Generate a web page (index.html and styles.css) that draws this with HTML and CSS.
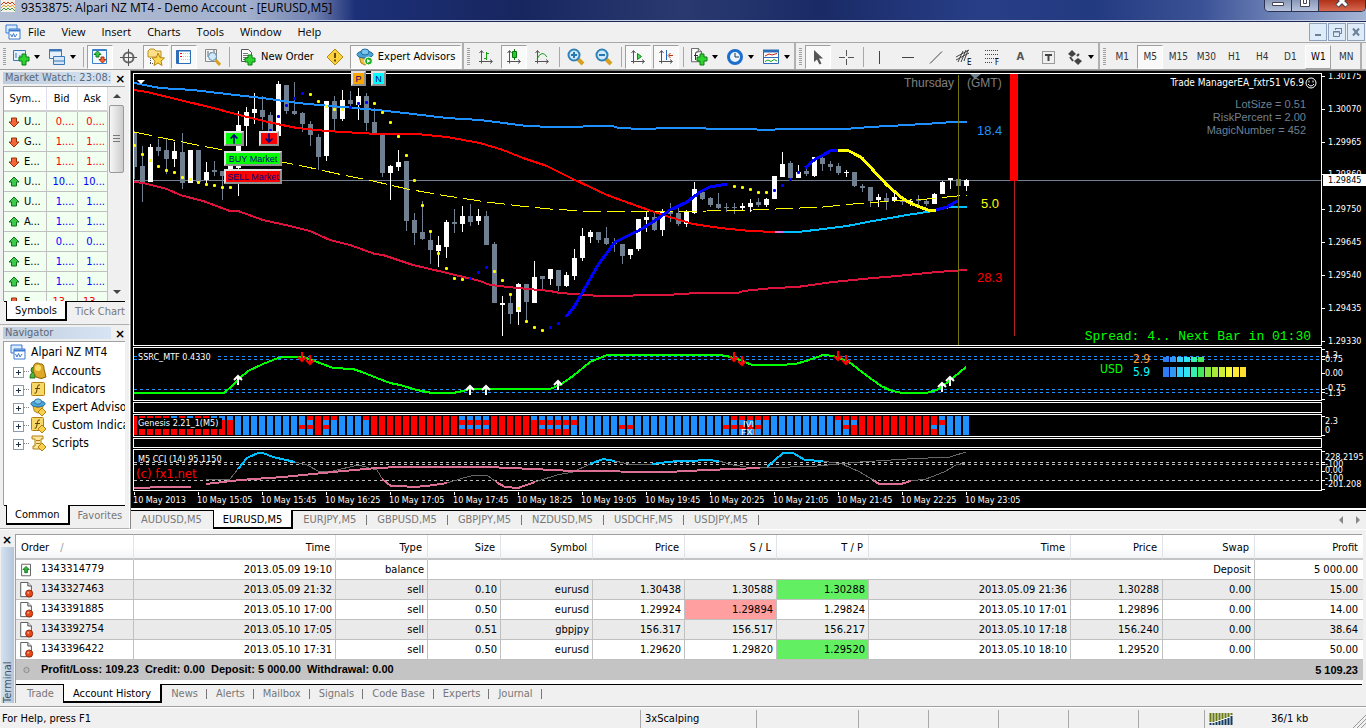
FILE: index.html
```html
<!DOCTYPE html>
<html lang="en">
<head>
<meta charset="utf-8">
<title>9353875: Alpari NZ MT4 - Demo Account - [EURUSD,M5]</title>
<link rel="stylesheet" href="styles.css">
</head>
<body>
<svg class="defs" aria-hidden="true">
  <defs>
    <symbol id="up" viewBox="0 0 12 12"><path d="M6 1 11 6 8.500 6 8.500 10 3.500 10 3.500 6 1 6Z" fill="#3cc84a" stroke="#12701c"/></symbol>
    <symbol id="down" viewBox="0 0 12 12"><path d="M6 11 1 6 3.500 6 3.500 2 8.500 2 8.500 6 11 6Z" fill="#f2673a" stroke="#99300c"/></symbol>
    <symbol id="axes" viewBox="0 0 18 18"><path d="M4.500 3V15.500M2 13.500H15M2.500 5 4.500 2.500 6.500 5M13 11.500 15.500 13.500 13 15.500" fill="none" stroke="#555"/></symbol>
    <symbol id="doc" viewBox="0 0 16 18"><path d="M1.500.500H9.500L13.500 4.500V16.500H1.500Z" fill="#fff" stroke="#444"/><path d="M9.500.500V4.500H13.500" fill="#ddd" stroke="#444"/></symbol>
    <symbol id="sheet" viewBox="0 0 16 18"><use href="#doc"/><circle cx="11" cy="13" r="4" fill="#e8481c" stroke="#8c2508"/><circle cx="10" cy="12" r="1" fill="#ffb090"/></symbol>
    <symbol id="app" viewBox="0 0 16 16"><path d="M1 1H12V9H1Z" fill="#dcecff" stroke="#3a7bd0"/><path d="M4 5H15V15H4Z" fill="#fff" stroke="#3a7bd0"/><path d="M4 6.500H15" stroke="#3a7bd0" stroke-width="2"/><path d="M5.500 10 7 13 8.500 9.500 10 13 12 10" fill="none" stroke="#3a7bd0"/></symbol>
    <symbol id="hat" viewBox="0 0 18 18"><path d="M3 8 9 11 15 8 13 15 9 17 5 15Z" fill="#f2c33c" stroke="#ab7c10"/><ellipse cx="9" cy="6.500" rx="8" ry="3.500" fill="#4ba5d8" stroke="#226b9c"/><ellipse cx="9" cy="4" rx="4" ry="3" fill="#7cc6ec" stroke="#226b9c"/></symbol>
  </defs>
</svg>
<div class="app">
  <header class="titlebar">
    <svg class="logo" viewBox="0 0 14 14"><path d="M0 0H14V12H0Z" fill="#f4f0e4"/><path d="M0 5 3 2 5 4 7 2 9 4 11 2 14 5" fill="none" stroke="#d03820"/><path d="M0 8 3 5 5 7 7 5 9 7 11 5 14 8" fill="none" stroke="#e0a030"/><path d="M0 11 3 8 5 10 7 8 9 10 11 8 14 11" fill="none" stroke="#3a9a40"/></svg>
    <h1>9353875: Alpari NZ MT4 - Demo Account - [EURUSD,M5]</h1>
    <div class="winbtns">
      <button aria-label="Minimize"><svg viewBox="0 0 14 8"><path d="M1.500 2.500H12.500V5.500H1.500Z" fill="#fff" stroke="#445"/></svg></button>
      <button aria-label="Restore"><svg viewBox="0 0 14 8"><path d="M2.500-1V6.500H11.500V-1M5.500-1V3.500H8.500V-1" fill="#fff" stroke="#445"/></svg></button>
      <button class="close" aria-label="Close"><svg viewBox="0 0 14 8"><path d="M2-4 12 6M12-4 2 6" stroke="#445" stroke-width="5"/><path d="M2.500-3.500 11.500 5.500M11.500-3.500 2.500 5.500" stroke="#fff" stroke-width="3"/></svg></button>
    </div>
  </header>

  <nav class="menubar">
    <svg class="i16"><use href="#app"/></svg>
    <button>File</button><button>View</button><button>Insert</button><button>Charts</button><button>Tools</button><button>Window</button><button>Help</button>
    <div class="mdi">
      <button aria-label="Minimize chart"><svg viewBox="0 0 16 16"><path d="M5 11H11" stroke="#6b7f95" stroke-width="2"/></svg></button>
      <button aria-label="Restore chart"><svg viewBox="0 0 16 16"><path d="M6.500 6V4.500H12.500V9.500H11M6 4.500H13M4.500 7.500H10.500V12.500H4.500ZM4 8H11" fill="none" stroke="#6b7f95"/></svg></button>
      <button aria-label="Close chart"><svg viewBox="0 0 16 16"><path d="M5 4.500 11 11.500M11 4.500 5 11.500" stroke="#6b7f95" stroke-width="2"/></svg></button>
    </div>
  </nav>

  <div class="toolbars">
    <div class="bar">
      <i class="grip"></i>
      <button class="drop" aria-label="New chart"><svg class="i18" viewBox="0 0 18 18"><path d="M1.500 2.500H13.500V12.500H1.500Z" fill="#e4f1fc" stroke="#3c78b8"/><path d="M4 5V10M8 7V10" stroke="#3c78b8"/><path d="M10 6H14V9H17V13H14V17H10V13H7V9H10Z" fill="#2fd52f" stroke="#0b7a12"/></svg></button>
      <button class="drop" aria-label="Profiles"><svg class="i18" viewBox="0 0 18 18"><path d="M1.500 1.500H13.500V10.500H1.500Z" fill="#e4f1fc" stroke="#3c78b8"/><path d="M1 2.500H14" stroke="#3c78b8" stroke-width="2"/><path d="M5.500 8.500H16.500V16.500H5.500Z" fill="#d4e6f8" stroke="#3c78b8"/><path d="M5 13H17" stroke="#3c78b8"/></svg></button>
      <i class="sep"></i>
      <button class="on" aria-label="Market Watch"><svg class="i18" viewBox="0 0 18 18"><path d="M1.500 1.500H15.500V15.500H1.500Z" fill="#f4faff" stroke="#3a80cc"/><path d="M1 2.500H16" stroke="#3a80cc"/><path d="M6.500 3 10 6.500H8V9H5V6.500H3Z" fill="#3cc84a" stroke="#127a1c"/><path d="M11.500 15 8 11.500H10V9H13V11.500H15Z" fill="#f2673a" stroke="#a83408"/></svg></button>
      <button aria-label="Data Window"><svg class="i18" viewBox="0 0 18 18"><circle cx="9.500" cy="9.500" r="5" fill="none" stroke="#666" stroke-width="2"/><path d="M9.500 1V18M1 9.500H18" stroke="#555"/></svg></button>
      <button class="on" aria-label="Navigator"><svg class="i18" viewBox="0 0 18 18"><path d="M1 3 3 1H7L9 3H14V9H1Z" fill="#fae189" stroke="#c09020"/><path d="M11 5 13 9.500 17.500 10 14 13 15 17.500 11 15 7 17.500 8 13 5 10 9.500 9.500Z" fill="#fcd84c" stroke="#b88412"/><path d="M3.500 10V16M3 15.500H7" stroke="#555" stroke-dasharray="1 1"/></svg></button>
      <button class="on" aria-label="Terminal"><svg class="i18" viewBox="0 0 18 18"><path d="M1.500 2.500H15.500V15.500H1.500Z" fill="#fff" stroke="#2d6db8"/><path d="M1 3H16" stroke="#2d6db8"/><path d="M3 3V15" stroke="#2d6db8" stroke-width="2"/><path d="M6 5.500H15M6 8.500H15M6 11.500H15" stroke="#b8c8dc" stroke-dasharray="1 1"/><path d="M5 5.500H7M5 8.500H7" stroke="red"/></svg></button>
      <button aria-label="Strategy Tester"><svg class="i18" viewBox="0 0 18 18"><path d="M2.500 1.500H13.500V13.500H2.500Z" fill="#f4f4f4" stroke="#888"/><path d="M5 3V9M8 4V8M11 2V9" stroke="#666"/><circle cx="9.500" cy="8.500" r="4" fill="#cfe8fa" stroke="#5b8db8"/><path d="M12.500 12 17 17" stroke="#d8a020" stroke-width="3"/></svg></button>
      <i class="sep"></i>
      <button class="text"><svg class="i18" viewBox="0 0 18 18"><path d="M2.500 1.500H9.500L12.500 4.500V13.500H2.500Z" fill="#fff" stroke="#555"/><path d="M4 5.500H9M4 7.500H11M4 9.500H9M4 11.500H7" stroke="#777"/><path d="M9 7H13V10H16V14H13V17H9V14H6V10H9Z" fill="#2fd52f" stroke="#0b7a12"/></svg>New Order</button>
      <button aria-label="MetaEditor"><svg class="i18" viewBox="0 0 18 18"><path d="M9 1 17 9 9 17 1 9Z" fill="#fbd23c" stroke="#b48a10"/><path d="M9 5V10M9 11.500V13.500" stroke="#6b4a00" stroke-width="2"/></svg></button>
      <button class="text on"><svg class="i18"><use href="#hat"/><circle cx="12.500" cy="13" r="4" fill="#20b028" stroke="#fff"/><path d="M11 11 14.500 13 11 15Z" fill="#fff"/></svg>Expert Advisors</button>
    </div>
    <div class="bar">
      <i class="grip"></i>
      <button aria-label="Bar Chart"><svg class="i18"><use href="#axes"/><path d="M9.500 4V12M9 5.500H12M7 10.500H10" stroke="#16a016"/></svg></button>
      <button class="on" aria-label="Candlesticks"><svg class="i18"><use href="#axes"/><path d="M9.500 1V12" stroke="#087808"/><path d="M7.500 3.500H11.500V9.500H7.500Z" fill="#28c838" stroke="#087808"/></svg></button>
      <button aria-label="Line Chart"><svg class="i18"><use href="#axes"/><path d="M4 11Q9 1 14 9" fill="none" stroke="#16a016"/></svg></button>
      <i class="sep"></i>
      <button aria-label="Zoom In"><svg class="i18" viewBox="0 0 18 18"><path d="M11 11 16 16" stroke="#d8a020" stroke-width="4"/><circle cx="7" cy="7" r="5.500" fill="#cfeafc" stroke="#3080b8" stroke-width="2"/><path d="M4 7H10M7 4V10" stroke="#2878b0" stroke-width="2"/></svg></button>
      <button aria-label="Zoom Out"><svg class="i18" viewBox="0 0 18 18"><path d="M11 11 16 16" stroke="#d8a020" stroke-width="4"/><circle cx="7" cy="7" r="5.500" fill="#cfeafc" stroke="#3080b8" stroke-width="2"/><path d="M4 7H10" stroke="#2878b0" stroke-width="2"/></svg></button>
      <i class="sep"></i>
      <button class="on" aria-label="Auto Scroll"><svg class="i18"><use href="#axes"/><path d="M8.500 5.500 12.500 8.500 8.500 11.500Z" fill="#4bd858" stroke="#0b8a16"/></svg></button>
      <button class="on" aria-label="Chart Shift"><svg class="i18"><use href="#axes"/><path d="M9.500 2V12" stroke="#1f68c0"/><path d="M16 7.500H12M13.500 5 11 7.500 13.500 10" fill="none" stroke="#c03008"/></svg></button>
      <i class="sep"></i>
      <button class="drop" aria-label="Indicators"><svg class="i18" viewBox="0 0 18 18"><use href="#doc" width="14" height="15"/><path d="M8 4Q5.500 3 5.500 6V12M4 7.500H8" fill="none" stroke="#333"/><path d="M10 6H14V9H17V13H14V17H10V13H7V9H10Z" fill="#2fd52f" stroke="#0b7a12"/></svg></button>
      <button class="drop" aria-label="Periods"><svg class="i18" viewBox="0 0 18 18"><circle cx="9" cy="9" r="6.500" fill="#eaf5ff" stroke="#1c6fce" stroke-width="3"/><path d="M9 5V9H13" fill="none" stroke="#234"/></svg></button>
      <button class="drop" aria-label="Templates"><svg class="i18" viewBox="0 0 18 18"><path d="M1.500 2.500H16.500V15.500H1.500Z" fill="#fff" stroke="#2d6db8"/><path d="M1 3H17" stroke="#2d6db8" stroke-width="3"/><path d="M1 9.500H17" stroke="#2d6db8"/><path d="M3 8 7 6 10 7 15 5.500" fill="none" stroke="#c02010"/><path d="M3 13.500 6 12 9 13.500 12 11.500 15 13" fill="none" stroke="#16a016"/></svg></button>
    </div>
    <div class="bar">
      <i class="grip"></i>
      <button class="on" aria-label="Cursor"><svg class="i18" viewBox="0 0 18 18"><path d="M5 2V14L8 11.500 10.500 16.500 12.500 15.500 10 10.500H14Z" fill="#555"/></svg></button>
      <button aria-label="Crosshair"><svg class="i18" viewBox="0 0 18 18"><path d="M9.500 2V8M9.500 11V17M2 9.500H8M11 9.500H17" stroke="#555"/></svg></button>
      <i class="sep"></i>
      <button aria-label="Vertical Line"><svg class="i18" viewBox="0 0 18 18"><path d="M8.500 3V16" stroke="#444"/></svg></button>
      <button aria-label="Horizontal Line"><svg class="i18" viewBox="0 0 18 18"><path d="M3 9.500H15" stroke="#444"/></svg></button>
      <button aria-label="Trendline"><svg class="i18" viewBox="0 0 18 18"><path d="M3 15.500 15 3.500" stroke="#444"/></svg></button>
      <button aria-label="Equidistant Channel"><svg class="i18" viewBox="0 0 18 18"><path d="M1 9 14 2M1 12 14 5M3 14 8 3M6 14 11 2M9 13 13 2" stroke="#444"/><text class="sub" x="12" y="17">E</text></svg></button>
      <button aria-label="Fibonacci"><svg class="i18" viewBox="0 0 18 18"><path d="M2 2.500H15M2 6.500H15M2 10.500H15M2 14.500H10" stroke="#444" stroke-dasharray="1 1"/><text class="sub" x="12" y="17">F</text></svg></button>
      <button class="glyph" aria-label="Text">A</button>
      <button aria-label="Text Label"><svg class="i18" viewBox="0 0 18 18"><path d="M3.500 3.500H15.500V15.500H3.500Z" fill="none" stroke="#444" stroke-dasharray="1 1"/><path d="M6 7H13M9.500 7V13" fill="none" stroke="#444" stroke-width="2"/></svg></button>
      <button class="drop" aria-label="Arrows"><svg class="i18" viewBox="0 0 18 18"><path d="M6 2 10 6 6 9 2 6ZM12 10 16 13 12 17 8 13Z" fill="#444"/><path d="M4 9 7 13M11 8 13 6" stroke="#444" stroke-width="2"/></svg></button>
    </div>
    <div class="bar periods">
      <i class="grip"></i>
      <button>M1</button><button class="on">M5</button><button>M15</button><button>M30</button><button>H1</button><button>H4</button><button>D1</button><button class="hover">W1</button><button>MN</button>
    </div>
  </div>

  <main class="workspace">
    <aside class="side">
      <section class="panel market">
        <div class="caption"><h2>Market Watch: 23:08:</h2><button aria-label="Close Market Watch">×</button></div>
        <div class="list">
          <table class="quotes">
            <thead><tr><th>Sym...</th><th>Bid</th><th>Ask</th></tr></thead>
            <tbody id="quotes"></tbody>
          </table>
          <div class="scroll"><i class="arrow top"></i><i class="thumb"></i><i class="arrow bottom"></i></div>
        </div>
        <div class="tabs small"><button class="active">Symbols</button><button>Tick Chart</button></div>
      </section>
      <section class="panel navigator">
        <div class="caption"><h2>Navigator</h2><button aria-label="Close Navigator">×</button></div>
        <ul class="tree">
          <li class="root"><svg class="i16"><use href="#app"/></svg>Alpari NZ MT4</li>
          <li><svg class="i18" viewBox="0 0 18 18"><circle cx="5" cy="8" r="3" fill="#49b83c" stroke="#21701a"/><path d="M1 16Q1 10 6 10V16Z" fill="#49b83c" stroke="#21701a"/><path d="M4 9Q4 1 8 1 10 1 11 2 15 1 15 7L17 15Q12 18 7 15Z" fill="#e0a828" stroke="#8c6408"/><circle cx="9" cy="6" r="3" fill="#fce06c"/></svg>Accounts</li>
          <li><svg class="i18" viewBox="0 0 18 18"><rect x="2.500" y="2.500" width="13" height="13" rx="1" fill="#f8d868" stroke="#b08010"/><path d="M11 5Q9 4 8.500 7L7.500 12Q7 14 5.500 13M6 8.500H11" fill="none" stroke="#604400"/></svg>Indicators</li>
          <li><svg class="i18" viewBox="0 0 18 18"><use href="#hat" width="18" height="16"/><path d="M13 10 17 14 13 18 9 14Z" fill="#f8d04c" stroke="#b08010"/></svg>Expert Advisors</li>
          <li><svg class="i18" viewBox="0 0 18 18"><rect x="2.500" y="1.500" width="12" height="13" rx="1" fill="#f8d868" stroke="#b08010"/><path d="M11 4Q9 3 8.500 6L7.500 11Q7 13 5.500 12M6 7.500H11" fill="none" stroke="#604400"/><path d="M13 9 17 13 13 17 9 13Z" fill="#f8d04c" stroke="#b08010"/></svg>Custom Indicators</li>
          <li><svg class="i18" viewBox="0 0 18 18"><path d="M3 2H14V5H12V12H14V15H4V12H6V5H3Z" fill="#fbe59a" stroke="#b08010"/><path d="M7 6.500H11M7 9.500H11" stroke="#b08010"/><path d="M13 9 17 13 13 17 9 13Z" fill="#f8d04c" stroke="#b08010"/></svg>Scripts</li>
        </ul>
        <div class="tabs small"><button class="active">Common</button><button>Favorites</button></div>
      </section>
    </aside>

    <section class="charts">
      <div class="frame">
        <div class="pane price">
          <svg class="plot" id="price"></svg>
          <button class="obj up" aria-label="Buy arrow"><svg viewBox="0 0 14 12"><path d="M7 12V2M3 6 7 2 11 6" fill="none" stroke="#000080" stroke-width="2"/></svg></button>
          <button class="obj dn" aria-label="Sell arrow"><svg viewBox="0 0 14 12"><path d="M7 0V10M3 6 7 10 11 6" fill="none" stroke="#000080" stroke-width="2"/></svg></button>
          <button class="obj buy">BUY Market</button>
          <button class="obj sell">SELL Market</button>
          <button class="obj p">P</button>
          <button class="obj n">N</button>
          <p class="ea">Trade ManagerEA_fxtr51 V6.9<svg viewBox="0 0 12 12"><circle cx="6" cy="6" r="5" fill="none" stroke="#fff"/><path d="M4 3.500V5.500M8 3.500V5.500M3 7Q6 11 9 7" fill="none" stroke="#fff"/></svg></p>
          <div class="lots"><p>LotSize = 0.51</p><p>RiskPercent = 2.00</p><p>MagicNumber = 452</p></div>
          <p class="spread">Spread: 4.. Next Bar in 01:30</p>
        </div>
        <svg class="axis" id="axisPrice"></svg>

        <div class="pane ssrc"><svg class="plot" id="ssrc"></svg><p class="label">SSRC_MTF 0.4330</p></div>
        <svg class="axis" id="axisSsrc"></svg>

        <div class="pane"></div><i></i>

        <div class="pane genesis"><svg class="plot" id="genesis"></svg><p class="label solid">Genesis 2.21_1(M5)</p></div>
        <svg class="axis" id="axisGenesis"></svg>

        <div class="pane"></div><i></i>

        <div class="pane cci"><svg class="plot" id="cci"></svg><p class="label">M5 CCI (14) 95.1150</p><p class="credit">(c) fx1.net</p></div>
        <svg class="axis" id="axisCci"></svg>

        <div class="times" id="times"></div>
      </div>
      <div class="tabs sheets">
        <button>AUDUSD,M5</button><button class="active">EURUSD,M5</button><button>EURJPY,M5</button><button>GBPUSD,M5</button><button>GBPJPY,M5</button><button>NZDUSD,M5</button><button>USDCHF,M5</button><button>USDJPY,M5</button>
        <svg class="pager" viewBox="0 0 24 10"><path d="M5 1V9L1 5ZM18 1V9L22 5Z" fill="#888"/></svg>
      </div>
    </section>
  </main>

  <section class="terminal">
    <div class="rail"><button aria-label="Close Terminal">×</button><h2>Terminal</h2></div>
    <div class="book">
      <table class="orders">
        <colgroup><col class="c118"><col class="c202"><col class="c92"><col class="c73"><col class="c92"><col class="c92"><col class="c92"><col class="c92"><col class="c202"><col class="c92"><col class="c92"><col class="c108"></colgroup>
        <thead><tr><th>Order <span>/</span></th><th>Time</th><th>Type</th><th>Size</th><th>Symbol</th><th>Price</th><th>S / L</th><th>T / P</th><th>Time</th><th>Price</th><th>Swap</th><th>Profit</th></tr></thead>
        <tbody>
          <tr><td><svg class="ico" viewBox="0 0 16 18"><path d="M2.500 2.500H12.500V15.500H2.500Z" fill="#fff" stroke="#555"/><path d="M7.500 5 11 8.500H9V12H6V8.500H4Z" fill="#2fb83a" stroke="#11701a"/></svg>1343314779</td><td>2013.05.09 19:10</td><td>balance</td><td colspan="8">Deposit</td><td>5 000.00</td></tr>
          <tr><td><svg class="ico"><use href="#sheet"/></svg>1343327463</td><td>2013.05.09 21:32</td><td>sell</td><td>0.10</td><td>eurusd</td><td>1.30438</td><td>1.30588</td><td class="tp">1.30288</td><td>2013.05.09 21:36</td><td>1.30288</td><td>0.00</td><td>15.00</td></tr>
          <tr><td><svg class="ico"><use href="#sheet"/></svg>1343391885</td><td>2013.05.10 17:00</td><td>sell</td><td>0.50</td><td>eurusd</td><td>1.29924</td><td class="sl">1.29894</td><td>1.29824</td><td>2013.05.10 17:01</td><td>1.29896</td><td>0.00</td><td>14.00</td></tr>
          <tr><td><svg class="ico"><use href="#sheet"/></svg>1343392754</td><td>2013.05.10 17:05</td><td>sell</td><td>0.51</td><td>gbpjpy</td><td>156.317</td><td>156.517</td><td>156.217</td><td>2013.05.10 17:18</td><td>156.240</td><td>0.00</td><td>38.64</td></tr>
          <tr><td><svg class="ico"><use href="#sheet"/></svg>1343396422</td><td>2013.05.10 17:31</td><td>sell</td><td>0.50</td><td>eurusd</td><td>1.29620</td><td>1.29820</td><td class="tp">1.29520</td><td>2013.05.10 18:10</td><td>1.29520</td><td>0.00</td><td>50.00</td></tr>
        </tbody>
        <tfoot><tr><td colspan="11"><svg class="ico" viewBox="0 0 16 18"><circle cx="8" cy="9" r="3" fill="#bbb" stroke="#888"/></svg>Profit/Loss: 109.23&nbsp; Credit: 0.00&nbsp; Deposit: 5 000.00&nbsp; Withdrawal: 0.00</td><td>5 109.23</td></tr></tfoot>
      </table>
      <div class="tabs pages"><button>Trade</button><button class="active">Account History</button><button>News</button><button>Alerts</button><button>Mailbox</button><button>Signals</button><button>Code Base</button><button>Experts</button><button>Journal</button></div>
    </div>
  </section>

  <footer class="status">
    <span class="help">For Help, press F1</span><span class="s116">3xScalping</span><span class="s102"></span><span class="s70"></span><span class="s70"></span><span class="s70"></span><span class="s70"></span><span class="s66"></span>
    <span class="net"><svg viewBox="0 0 24 12"><path d="M1.500 0V9M4.500 0V9M7.500 0V8M10.500 0V7M13.500 0V6M16.500 0V5M19.500 0V4M22.500 0V2" stroke="#6b7a10" stroke-width="2"/><path d="M1.500 10V12M4.500 10V12M7.500 9V12M10.500 8V12M13.500 7V12M16.500 6V12M19.500 5V12M22.500 3V12" stroke="#103c60" stroke-width="2"/></svg>36/1 kb</span>
    <svg class="corner" viewBox="0 0 14 14"><path d="M1 14 14 1M5 14 14 5M9 14 14 9" stroke="#999"/></svg>
  </footer>
</div>
<script src="chart.js"></script>
</body>
</html>
```
FILE: chart.js
```js
const byId = id => document.getElementById(id);
const STEP = 8;
const FIRST = 134;
const barX = k => FIRST + STEP * k;

// Window-space origin of each plot area
const layer = (y, content) => `<g transform="translate(-134 ${-y})">${content}</g>`;
const line = (pts, cls) => `<polyline class="${cls}" points="${pts}"/>`;
const rule = (y, cls) => `<line class="${cls}" x1="0" x2="100%" y1="${y}" y2="${y}"/>`;

// Market Watch rows
byId('quotes').innerHTML = [
  ['down', 'U...', '0....'], ['down', 'G...', '1....'], ['down', 'E...', '1....'],
  ['up', 'U...', '10...'], ['up', 'U...', '1....'], ['up', 'A...', '1....'],
  ['up', 'E...', '0....'], ['up', 'E...', '1....'], ['up', 'E...', '1....'], ['down', 'E...', '13...']
].map(([d, s, q]) => `<tr class="${d}"><td><svg class="i12"><use href="#${d}"/></svg>${s}</td><td>${q}</td><td>${q}</td></tr>`).join('');

// Candles: high, low, body top, body bottom; w = rising, g = falling
const candles = `131 179 133 167 g,146 202 166 182 g,144 182 147 182 w,139 156 147 151 g,139 174 150 159 g,142 167 151 159 w,133 189 152 183 g,150 183 150 183 w,150 182 150 182 g,162 183 172 180 w,161 176 170 172 g,171 200 171 176 g,165 180 165 180 w,111 196 125 168 w,107 146 112 126 w,93 124 109 113 w,96 130 110 117 g,112 131 115 131 g,81 140 84 136 w,85 114 85 111 g,82 115 111 114 g,112 132 113 124 g,121 146 124 135 g,134 170 137 157 g,101 161 101 156 w,96 131 101 119 g,90 121 100 119 w,91 108 100 104 g,88 120 96 105 w,93 131 96 123 g,108 133 122 133 g,134 177 134 173 g,165 200 166 173 w,150 171 162 167 w,161 231 161 221 g,213 245 220 233 g,201 240 232 239 g,231 264 240 250 g,236 267 245 251 w,220 258 222 247 w,209 233 222 224 g,206 232 216 224 w,204 226 216 222 g,209 225 216 221 w,211 245 216 245 g,242 303 244 303 g,296 336 303 305 w,296 324 303 314 g,283 325 284 312 w,284 322 284 302 g,261 303 277 303 w,276 289 276 279 g,269 285 269 279 w,270 291 270 286 g,272 287 275 286 w,249 280 258 276 w,228 261 236 258 w,230 243 232 237 w,232 243 232 240 g,227 245 238 244 g,238 252 242 244 g,244 264 244 256 g,249 259 249 255 w,219 251 219 249 w,212 232 217 220 w,212 231 217 230 g,209 236 212 230 w,203 222 212 214 g,208 226 213 224 g,210 227 212 224 w,182 214 189 213 w,189 200 192 199 g,197 207 198 205 g,193 209 204 208 g,203 212 207 208 g,203 214 207 208 g,203 210 206 208 w,199 212 203 207 w,198 207 202 205 g,198 207 199 205 w,176 199 176 199 w,152 177 164 177 w,161 178 163 178 g,165 178 172 178 w,167 176 171 174 g,157 177 157 176 w,155 171 158 164 g,161 171 164 167 g,163 175 166 173 g,170 177 172 173 w,172 187 172 186 g,184 192 186 188 g,187 207 187 201 g,194 207 197 200 w,193 210 198 202 g,193 202 197 201 w,198 205 200 202 g,199 206 201 203 w,195 205 199 201 g,200 206 201 204 g,193 204 194 204 w,181 194 182 194 w,178 189 178 180 w,179 186 179 186 g,179 191 180 186 w`
  .split(',').map((row, k) => {
    const [h, l, t, b, c] = row.split(' ');
    const x = barX(k);
    return `<rect class="${c}" x="${x}" y="${h}" width="1" height="${l - h}"/><rect class="${c}" x="${x - 2}" y="${t}" width="5" height="${Math.max(1, b - t)}"/>`;
  }).join('');

// Dotted indicator: first bar, colour, levels
const dots = [
  [0, 'yellow', [145, 154, 160, 166, 170, 172, 177, 179, 182, 184, 185, 187, 187]],
  [17, 'blue', [130, 116, 105, 98, 93]], [22, 'yellow', [94, 101, 106, 109, 109]],
  [27, 'blue', [107, 103, 102]], [30, 'yellow', [103, 112, 122, 136, 155, 180, 205, 231, 253, 268, 278, 279]],
  [42, 'blue', [278, 272, 267]], [45, 'yellow', [271, 280, 294, 308, 321, 327, 330]],
  [52, 'blue', [327, 323]], [75, 'yellow', [186, 187, 189, 192, 192]], [80, 'blue', [190, 185, 179, 172]]
].map(([k, c, ys]) => ys.map((y, i) => `<rect x="${barX(k + i) - 1}" y="${y - 1}" width="3" height="3" rx="1" fill="${c}"/>`).join('')).join('');

byId('price').innerHTML = rule(106, 'bid') + layer(74,
  candles +
  line('134,83 160,88 193,90 227,94 262,98 277,100 297,103 330,106 343,107 377,110 413,114 447,118 480,120 527,126 553,127 613,126 618,128 643,129 670,128 740,129 773,130 777,129 845,129 870,127 907,125 940,123 952,122 967,122', 'l2 dodger') +
  line('134,90 147,92 180,100 213,108 247,117 277,124 297,128 327,131 377,134 417,134 447,137 480,143 503,150 523,158 547,166 573,179 607,195 640,207 663,215 693,224 720,228 750,231 776,232', 'l2 red') +
  line('775,232 783,232', 'l2 orchid') +
  line('783,232 798,232 823,229 847,226 873,221 907,215 933,211 950,207 967,207', 'l2 sky') +
  line('134,182 143,183 167,189 180,195 203,201 230,211 238,211 263,220 290,226 310,231 330,240 350,245 375,254 383,255 413,265 447,273 480,281 490,285 517,288 550,291 560,293 600,296 667,295 697,293 738,293 743,291 773,288 797,287 833,282 873,278 897,276 937,272 967,270', 'l2 crimson') +
  line('134,132 173,140 197,145 223,150 282,162 307,167 343,175 373,181 407,189 447,196 487,202 520,206 550,209 583,211 613,212 707,211 753,210 800,208 823,207 853,204 893,201 927,199 967,195', 'l1 dash yellow') +
  dots +
  line('566,317 574,307 582,293 590,279 598,265 607,253 614,243 623,238 638,231 653,222 670,210 687,202 700,192 710,187 727,184', 'l3 blue') +
  line('805,168 814,160 823,155 830,151 838,150', 'l3 blue') +
  line('838,150 847,150 853,153 862,158 873,170 887,185 902,198 910,203 920,207 928,210 936,211', 'l3 yellow') +
  line('936,210 947,207 959,200', 'l3 blue') +
  `<rect x="958" y="75" width="1" height="270" fill="#77770a"/>
   <path d="M137 80H145L141 84Z" fill="#fff"/><path d="M970 74H981L975 79Z" fill="#708090"/>
   <rect x="1010" y="74" width="8" height="107" fill="red"/><rect x="1014" y="181" width="1" height="155" fill="#b22222"/>
   <g class="sans12" fill="#808080"><text x="904" y="87">Thursday</text><text x="967" y="87">(GMT)</text></g>
   <g class="sans13"><text x="977" y="135" fill="#1e90ff">18.4</text><text x="981" y="208" fill="#ff0">5.0</text><text x="977" y="282" fill="red">28.3</text></g>`);

const axis = (y, rows, ticks = []) => `<g transform="translate(0 ${-y})">` +
  rows.map(([ty, s, x = 3]) => `<text x="${x}" y="${ty + 3}">${s}</text>`).join('') +
  ticks.map(t => `<rect x="0" y="${t}" width="3" height="1" fill="#fff"/>`).join('') + '</g>';
const levels = [[76, '1.30175'], [109, '1.30070'], [142, '1.29965'], [174, '1.29860'], [209, '1.29750'], [242, '1.29645'], [275, '1.29540'], [308, '1.29435'], [341, '1.29330']];
byId('axisPrice').innerHTML = axis(73, levels.map(([y, s]) => [y, s, 6]), levels.map(([y]) => y)) +
  '<rect x="1" y="101" width="43" height="12" fill="#fff"/><text x="6" y="110" class="current">1.29845</text>';
byId('axisSsrc').innerHTML = axis(347, [[355, '1.3'], [359, '0.75'], [373, '0.00'], [388, '-0.75'], [393, '-1.3']], [349, 356, 359, 373, 389, 392, 399]);
byId('axisGenesis').innerHTML = axis(414, [[421, '2.3'], [430, '0']], [416, 435]);
byId('axisCci').innerHTML = axis(449, [[457, '228.2195'], [464, '-100'], [470, '0.00'], [478, '-100'], [484, '-201.208']], [451, 462, 464, 471, 480, 489]);

// Signal arrows
const upArrow = ([x, y]) => `<path d="M${x} ${y + 5}V${y - 3}M${x - 4} ${y}L${x} ${y - 4} ${x + 4} ${y}" class="l2" stroke="#fff"/>`;
const downArrow = ([x, y]) => `<path d="M${x} ${y - 5}V${y + 3}M${x - 4} ${y}L${x} ${y + 4} ${x + 4} ${y}" class="l2" stroke="red"/>`;
const meter = (y, h, colours) => colours.map((c, i) => `<rect x="${1163 + 7 * i}" y="${y}" width="6" height="${h}" fill="${c}"/>`).join('');
const ramp = ['#2f7df6', '#2f97f6', '#2fd0ff', '#2fe4f0', '#33efb0', '#45e85a', '#84e840', '#a8e838', '#d0f038', '#f4f838', '#ffe838', '#ffdf30'];
byId('ssrc').innerHTML = [8, 11, 41, 44].map(y => rule(y, 'l1 guide')).join('') + layer(348,
  line('134,393 224,393 233,385 240,378 248,371 263,364 278,358 284,357 303,357 312,360 333,368 353,369 362,372 377,378 390,383 400,385 417,390 432,393 453,393 463,391 470,389 550,389 560,385 573,376 590,362 607,355 718,355 727,356 740,360 752,365 780,365 795,364 806,361 823,355 834,356 849,362 866,375 881,386 892,391 903,393 926,393 937,390 948,382 966,367', 'l2 lime') +
  [[238, 380], [470, 390], [486, 390], [558, 385], [942, 387], [950, 381]].map(upArrow).join('') +
  [[302, 357], [310, 360], [734, 357], [742, 361], [838, 356], [846, 360]].map(downArrow).join('') +
  meter(357, 5, ramp.slice(0, 6)) + meter(367, 10, ramp) +
  '<g class="wide"><text x="1100" y="373" fill="#0f0">USD</text><text x="1133" y="363" fill="#f93">2.9</text><text x="1133" y="376" fill="#0ff">5.9</text></g>');

// Four stacked cells per bar: [count, pattern]
let bar = 0;
const cells = [[5, 'RRRR'], [1, 'BRRR'], [1, 'RRRR'], [1, 'BRRR'], [2, 'RRRR'], [3, 'BRRR'], [8, 'BBBB'], [1, 'BBRB'], [1, 'RBRB'], [1, 'RRRR'], [1, 'RBRB'], [1, 'RBBB'], [3, 'BBBB'], [1, 'RBBB'], [11, 'RRRR'], [4, 'BRBR'], [5, 'RRRR'], [1, 'BRRR'], [4, 'BRBR'], [1, 'BRBB'], [5, 'BBBB'], [2, 'BBRB'], [11, 'BBBB'], [1, 'BBRB'], [4, 'RBRB'], [1, 'RBBB'], [8, 'BBBB'], [1, 'RBBB'], [1, 'RBRB'], [1, 'RBRR'], [9, 'RRRR'], [1, 'RRBR'], [1, 'BRBB'], [3, 'BBBB']]
  .map(([n, p]) => Array.from({ length: n }, () => {
    const x = barX(bar++) - 3;
    return [...p].map((c, i) => `<rect x="${x}" y="${[416, 420, 425, 429][i]}" width="6" height="${[4, 5, 4, 6][i]}" fill="${c === 'R' ? 'red' : '#1e90ff'}"/>`).join('');
  }).join('')).join('');
byId('genesis').innerHTML = layer(415, cells + '<g class="tiny"><text x="743" y="427">IVI</text><text x="741" y="435">FXI</text></g>');

byId('cci').innerHTML = [12, 14, 30].map(y => rule(y, 'l1 level')).join('') + layer(450,
  ['206,479 230,479 238,469', '295,462 307,465 320,472 333,471 358,465 377,470 383,480', '447,483 463,478 475,475 487,475 496,482', '535,482 557,475 573,472 590,464', '615,461 633,465 653,464', '719,461 733,465 753,468 767,467', '760,468 790,467 817,466 860,462 907,459 950,457 966,452', '823,461 842,464 860,472 873,480', '911,481 926,479 944,472 956,465 965,463'].map(p => line(p, 'l1 gray')).join('') +
  ['134,488 167,487 191,487', '206,484 240,480 283,477 333,472 377,468 400,467 487,467 533,469 573,471 667,472 707,470 760,468', '382,479 391,486 400,486 413,487 427,486 447,483', '496,482 505,487 518,488 535,482', '873,480 879,484 901,484 911,481'].map(p => line(p, 'l2 pink')).join('') +
  ['238,469 247,458 258,453 263,453 273,457 295,462', '590,464 603,459 615,461', '652,464 677,461 690,461 707,460 719,461', '767,467 783,453 793,453 805,460 823,461'].map(p => line(p, 'l2 sky')).join(''));

byId('times').innerHTML = ['2013', '15:05', '15:45', '16:25', '17:05', '17:45', '18:25', '19:05', '19:45', '20:25', '21:05', '21:45', '22:25', '23:05']
  .map(t => `<span>10 May ${t}</span>`).join('');
```
FILE: styles.css
```css
* { box-sizing: border-box; }
body, h1, h2, p, ul { margin: 0; padding: 0; }
body { font: 11px/14px "DejaVu Sans Condensed", "DejaVu Sans", "Noto Sans", sans-serif; color: #000; background: #f0f0f0; }
button { font: inherit; color: inherit; background: none; border: 0; padding: 0; margin: 0; white-space: nowrap; }
svg { display: block; flex: none; }
.defs { position: absolute; width: 0; height: 0; }
.i12 { width: 12px; height: 12px; }
.i16 { width: 16px; height: 16px; }
.i18 { width: 18px; height: 18px; }

.app { display: flex; flex-direction: column; height: 100vh; min-height: 600px; overflow: hidden; }

.titlebar { display: flex; flex: none; align-items: flex-start; height: 22px; overflow: hidden; border-bottom: 1px solid #1c2858; box-shadow: inset 0 -1px #c8d0e4;
  background: radial-gradient(ellipse at 335px 16px, #3f9fc0 0, transparent 14px), linear-gradient(90deg, #b4bfd4 0, #a4b1cd 18%, #7080b0 23%, #1c3078 26%, #18265f 38%, #2a3a70 50%, #1a2a66 60%, #283f88 72%, #223a80 80%, #3b5296 88%, #7c90c0 95%, #a4b4d4 100%); }
.logo { width: 14px; height: 14px; margin: 0 6px 0 1px; }
h1 { font: 12px/15px "Open Sans", "Noto Sans", sans-serif; }
.winbtns { display: flex; margin-left: auto; border: solid #2b3350; border-width: 0 1px 1px; border-radius: 0 0 5px 5px; overflow: hidden; }
.winbtns button { width: 27px; height: 11px; display: flex; justify-content: center; background: linear-gradient(#8a98b8, #b8c4dc); border-right: 1px solid #2b3350; }
.winbtns .close { width: 46px; border: 0; background: linear-gradient(#b03018, #d86850); }
.winbtns svg { width: 14px; height: 8px; }

.menubar { display: flex; flex: none; align-items: center; gap: 16px; height: 21px; padding-left: 5px; border-bottom: 1px solid #a8a8a8; font: 11px/16px "Open Sans", "Noto Sans", sans-serif; }
.menubar > .i16 { margin-right: -9px; }
.mdi { display: flex; gap: 1px; margin-left: auto; padding-right: 1px; }
.mdi button { width: 18px; height: 18px; border: 1px solid #8fa4bc; background: #deebf8; }
.mdi svg { width: 16px; height: 16px; }

.toolbars { display: flex; flex: none; height: 27px; border-bottom: 1px solid #a0a0a0; }
.bar { display: flex; flex: none; align-items: center; gap: 2px; padding: 1px 1px 0 3px; border-right: 2px solid #b0b0b0; }
.grip { width: 3px; height: 18px; margin-right: 1px; background: repeating-linear-gradient(#a0a0a0 0 1px, #f0f0f0 1px 2px); }
.sep { width: 1px; height: 20px; margin: 0 1px 0 2px; background: #a8a8a8; }
.bar button { display: flex; align-items: center; justify-content: center; width: 26px; height: 24px; border: 1px solid transparent; }
.bar .on { background: #f9f9f9; border-color: #a0a0a0 #fff #fff #a0a0a0; }
.bar .hover { background: #f6f6f6; border-color: #fff #a0a0a0 #a0a0a0 #fff; color: #000; }
.bar .drop { width: 34px; gap: 4px; }
.drop::after { content: ""; border: solid transparent; border-width: 4px 3px 0; border-top-color: #000; }
.bar .text { width: auto; gap: 4px; padding: 0 5px; }
.glyph { font-weight: bold; color: #555; }
.sub { font-size: 8px; }
.periods { color: #333; font-size: 10px; }

.workspace { display: flex; flex: 1; min-height: 0; }
.side { display: flex; flex-direction: column; flex: none; width: 130px; overflow: hidden; }
.panel { display: flex; flex-direction: column; min-height: 0; padding: 2px 4px 3px 3px; border-bottom: 1px solid #b0b0b0; border-right: 1px solid #fff; }
.market { flex: 256 1 0; }
.navigator { flex: 203 1 0; }
.caption { display: flex; justify-content: space-between; flex: none; height: 14px; }
.caption h2 { flex: 1; font: inherit; line-height: 12px; height: 12px; color: #5a6878; white-space: nowrap; padding-left: 2px; margin-right: 4px; background: linear-gradient(90deg, #bfcddd, #d6e4f4); }
.caption button, .rail button { font: bold 12px/12px "DejaVu Sans", sans-serif; }
.list { display: flex; flex: 1; min-height: 0; overflow: hidden; background: #fff; border: solid #a0a0a0; border-width: 1px 0 0 1px; }
.quotes { flex: 1; align-self: flex-start; border-spacing: 0; table-layout: fixed; width: 105px; }
.quotes th { height: 25px; font-weight: normal; border-right: 1px solid #dde; border-bottom: 2px solid #d0d0d0; padding: 0; }
.quotes th:first-child { width: 43px; }
.quotes td { height: 20px; padding: 0 2px 0 0; text-align: right; background: #f0fff0; border: solid #c0c0c0; border-width: 0 1px 1px 0; color: #00f; white-space: nowrap; }
.quotes td:first-child { color: #000; text-align: left; }
.quotes td svg { float: left; margin: 1px 4px 0 4px; }
.quotes .down td + td { color: red; }
.scroll { display: flex; flex-direction: column; align-items: center; width: 17px; padding: 7px 1px; background: #f0f0f0; }
.thumb { width: 15px; height: 68px; margin-top: 7px; border: 1px solid #999; border-radius: 2px; background: repeating-linear-gradient(#777 0 1px, transparent 1px 3px) center / 7px 9px no-repeat, linear-gradient(90deg, #f6f6f6, #ccc); }
.arrow { border: 4px solid transparent; }
.arrow.top { border-top: 0; border-bottom-color: #444; }
.arrow.bottom { border-bottom: 0; border-top-color: #444; margin-top: auto; }
.tree { flex: 1; min-height: 0; overflow: hidden; list-style: none; background: #fff; border: solid #a0a0a0; border-width: 1px 0 0 1px; font-size: 12px; }
.tree li { position: relative; display: flex; align-items: center; gap: 5px; height: 18px; padding-left: 25px; white-space: nowrap; }
.tree .root { padding-left: 6px; height: 20px; }
.tree li:not(.root)::before { content: ""; position: absolute; left: 9px; top: 5px; width: 9px; height: 9px; border: 1px solid #8c9cac; background: linear-gradient(#234, #234) center / 5px 1px no-repeat, linear-gradient(#234, #234) center / 1px 5px no-repeat, #fff; }
.tree li:not(.root)::after { content: ""; position: absolute; left: 19px; top: 9px; width: 6px; border-top: 1px dotted #888; }

.tabs { display: flex; flex: none; height: 19px; border-top: 1px solid #000; color: #777; }
.tabs button { height: 18px; }
.tabs .active { margin-top: -1px; height: 19px; padding-top: 2px; background: #fff; color: #000; border: solid #000; border-width: 0 2px 2px 1px; }
.small { margin-left: 1px; height: 20px; }
.small button { height: 19px; padding: 1px 8px 0; }
.small .active { margin-left: 2px; height: 20px; padding: 2px 8px 0; }

.charts { display: flex; flex-direction: column; flex: 1; min-width: 0; border-left: 1px solid #888; }
.frame { flex: 1; min-height: 0; display: grid; grid-template-columns: minmax(0, 1fr) 44px; grid-template-rows: minmax(0, 1fr) 54px 11px 23px 10px 42px 16px; row-gap: 1px; background: #000; border-top: 1px solid #808080; border-bottom: 2px solid #fff; padding: 2px 0 0 2px; }
.pane { position: relative; border: 1px solid #fff; }
.plot { width: 100%; height: 100%; overflow: hidden; }
.axis { width: 44px; height: 100%; overflow: hidden; font-size: 9px; fill: #fff; }
.axis .current { fill: #000; }
.plot line, .plot polyline, .plot path.l2 { fill: none; shape-rendering: crispEdges; }
.plot path.l2 { shape-rendering: auto; }
.w { fill: #fff; }
.g { fill: #708090; }
.l1 { stroke-width: 1; }
.l2 { stroke-width: 2; }
.l3 { stroke-width: 3; }
.bid { stroke: #708090; }
.dash { stroke-dasharray: 18 6; }
.guide { stroke: #1e90ff; stroke-dasharray: 3 3; }
.level { stroke: #c0c0c0; stroke-dasharray: 3 3; }
.dodger { stroke: #1e90ff; }
.red { stroke: red; }
.orchid { stroke: orchid; }
.sky { stroke: #00bfff; }
.crimson { stroke: crimson; }
.yellow { stroke: yellow; }
.blue { stroke: blue; }
.lime { stroke: lime; }
.gray { stroke: #696969; }
.pink { stroke: #db7093; }
.sans12 { font: 12px "Liberation Sans", sans-serif; }
.sans13 { font: 13px "Liberation Sans", sans-serif; }
.wide { font: 12px "DejaVu Sans Condensed", sans-serif; }
.tiny { font: 9px "Liberation Sans", sans-serif; fill: #fff; }

.obj { position: absolute; display: flex; align-items: center; justify-content: center; border: 2px solid; border-color: #e0e0e0 #909090 #909090 #e0e0e0; color: #000080; font: 9px/10px "Liberation Sans", sans-serif; }
.obj svg { width: 12px; height: 11px; }
.obj.up { left: 90px; top: 57px; width: 20px; height: 15px; background: lime; }
.obj.dn { left: 125px; top: 57px; width: 20px; height: 15px; background: red; }
.obj.buy { left: 90px; top: 77px; width: 58px; height: 15px; background: lime; }
.obj.sell { left: 90px; top: 95px; width: 58px; height: 15px; background: red; }
.obj.p { left: 217px; top: -3px; width: 15px; height: 15px; background: orange; }
.obj.n { left: 237px; top: -3px; width: 15px; height: 15px; background: cyan; }
.ea { position: absolute; right: 4px; top: 3px; display: flex; align-items: center; gap: 1px; color: #fff; font-size: 10px; line-height: 12px; }
.ea svg { width: 12px; height: 12px; }
.lots { position: absolute; right: 15px; top: 24px; color: #708090; text-align: right; font: 11px/13px "Liberation Sans", sans-serif; }
.spread { position: absolute; right: 10px; bottom: 1px; color: lime; font: 13px/14px "Liberation Mono", monospace; }
.label { position: absolute; left: 4px; top: 4px; color: #fff; font-size: 9px; line-height: 11px; white-space: nowrap; }
.ssrc .label, .label.solid { background: #000; padding-right: 4px; }
.label.solid { top: 3px; }
.credit { position: absolute; left: 2px; top: 16px; color: red; font: 13px/16px "DejaVu Sans Condensed", sans-serif; }
.times { grid-column: 1 / -1; display: flex; color: #fff; font-size: 9px; line-height: 16px; overflow: hidden; }
.times span { flex: none; width: 64px; white-space: nowrap; background: linear-gradient(#fff, #fff) 1px 0 / 1px 3px no-repeat; }

.sheets button { position: relative; padding: 0 11px 0 10px; }
.pages button { position: relative; padding: 0 9px; }
.sheets button:nth-child(n+3)::after, .pages button:nth-child(n+3)::after { content: ""; position: absolute; right: 0; top: 4px; height: 10px; border-right: 1px solid #777; }
.sheets .active { padding: 2px 9px 0; }
.pager { width: 24px; height: 10px; margin: 4px 4px 0 auto; }

.terminal { display: flex; flex: none; padding-top: 4px; border-top: 1px solid #fff; border-bottom: 1px solid #a0a0a0; padding-bottom: 3px; }
.rail { display: flex; flex-direction: column; align-items: center; flex: none; width: 15px; padding-right: 1px; }
.rail h2 { flex: 1; width: 13px; margin-top: 1px; writing-mode: vertical-rl; transform: rotate(180deg); font: inherit; line-height: 13px; color: #44505c; background: linear-gradient(90deg, #b4c6da, #d4e2f0); }
.book { flex: 1; min-width: 0; margin-right: 4px; border: solid #a0a0a0; border-width: 1px 0 0 1px; background: #f0f0f0; }
.orders { width: 100%; table-layout: fixed; border-spacing: 0; background: #fff; border-bottom: 4px solid #fff; }
.c118 { width: 118px; } .c202 { width: 202px; } .c92 { width: 92px; } .c73 { width: 73px; } .c108 { width: 108px; }
.orders th, .orders td { text-align: right; font-weight: normal; white-space: nowrap; padding: 0 3px; height: 20px; border: solid #c0c0c0; border-width: 0 1px 1px 0; }
.orders th { height: 25px; padding: 2px 5px 0; border-bottom: 2px solid #c4c4c4; border-right-color: #e0e4e8; background: linear-gradient(#fff 50%, #f4f5f7); }
.orders th:first-child { text-align: left; }
.orders th span { color: #999; margin-left: 8px; }
.orders td:first-child { text-align: left; }
.orders td:last-child, .orders th:last-child { border-right: 0; padding-right: 5px; }
.orders tbody tr:nth-child(even) { background: #eaeaea; }
.orders .tp { background: #62f062; }
.orders .sl { background: #ff9f9f; }
.orders tfoot td { background: #c4c4c4; border: 0; font: bold 11px/14px "Liberation Sans", sans-serif; }
.ico { float: left; width: 15px; height: 16px; margin-right: 7px; }
.pages { padding-left: 2px; }
.pages .active { padding: 2px 9px 0; }

.status { position: relative; display: flex; flex: none; align-items: center; height: 21px; padding-top: 2px; border-top: 1px solid #fff; }
.status span { height: 18px; line-height: 18px; border-left: 1px solid #a8a8a8; padding-left: 4px; }
.status .help { flex: 1; border: 0; padding-left: 2px; }
.s116 { width: 116px; } .s102 { width: 102px; } .s70 { width: 70px; } .s66 { width: 66px; }
.status .net { display: flex; align-items: center; gap: 38px; width: 162px; }
.net svg { width: 24px; height: 12px; }
.corner { position: absolute; right: 0; bottom: 0; width: 14px; height: 14px; }
```
